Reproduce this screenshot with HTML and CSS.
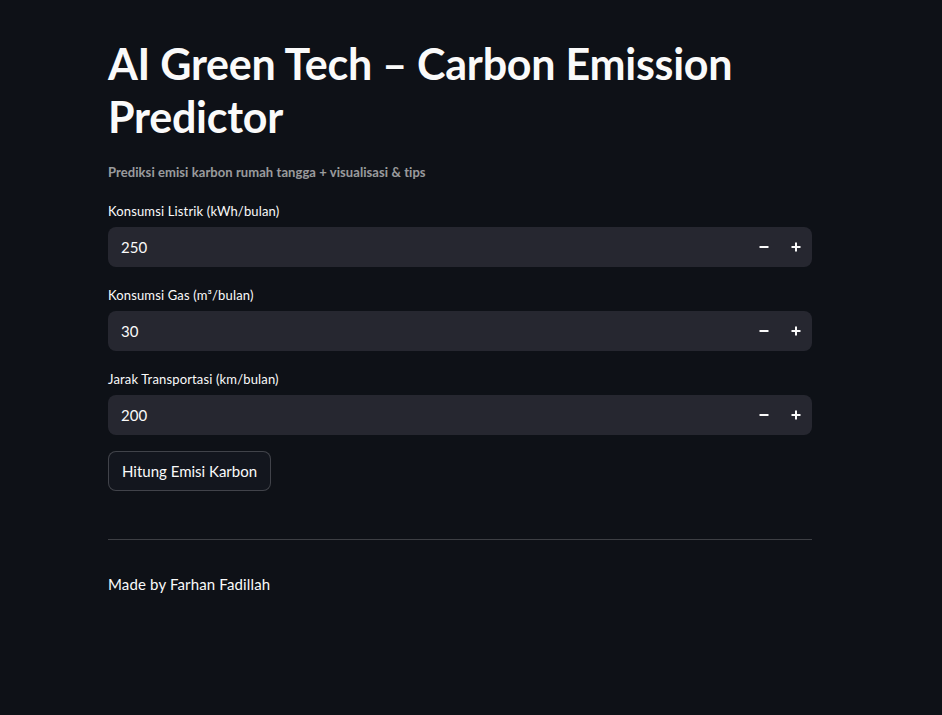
FILE: index.html
```html
<!DOCTYPE html>
<html lang="id">
<head>
<meta charset="utf-8">
<title>AI Green Tech – Carbon Emission Predictor</title>
<link rel="stylesheet" href="styles.css">
</head>
<body>
<main class="app">
  <div class="block">
    <h1 class="title">AI Green Tech – Carbon Emission Predictor</h1>
    <p class="caption">Prediksi emisi karbon rumah tangga + visualisasi &amp; tips</p>

    <div class="field">
      <label class="label">Konsumsi Listrik (kWh/bulan)</label>
      <div class="number-input">
        <span class="value">250</span>
        <button class="step" aria-label="minus"><svg width="12" height="12" viewBox="0 0 12 12"><rect x="1.5" y="5" width="9" height="2" fill="#fafafa"/></svg></button>
        <button class="step" aria-label="plus"><svg width="12" height="12" viewBox="0 0 12 12"><rect x="1.5" y="5" width="9" height="2" fill="#fafafa"/><rect x="5" y="1.5" width="2" height="9" fill="#fafafa"/></svg></button>
      </div>
    </div>

    <div class="field">
      <label class="label">Konsumsi Gas (m³/bulan)</label>
      <div class="number-input">
        <span class="value">30</span>
        <button class="step" aria-label="minus"><svg width="12" height="12" viewBox="0 0 12 12"><rect x="1.5" y="5" width="9" height="2" fill="#fafafa"/></svg></button>
        <button class="step" aria-label="plus"><svg width="12" height="12" viewBox="0 0 12 12"><rect x="1.5" y="5" width="9" height="2" fill="#fafafa"/><rect x="5" y="1.5" width="2" height="9" fill="#fafafa"/></svg></button>
      </div>
    </div>

    <div class="field">
      <label class="label">Jarak Transportasi (km/bulan)</label>
      <div class="number-input">
        <span class="value">200</span>
        <button class="step" aria-label="minus"><svg width="12" height="12" viewBox="0 0 12 12"><rect x="1.5" y="5" width="9" height="2" fill="#fafafa"/></svg></button>
        <button class="step" aria-label="plus"><svg width="12" height="12" viewBox="0 0 12 12"><rect x="1.5" y="5" width="9" height="2" fill="#fafafa"/><rect x="5" y="1.5" width="2" height="9" fill="#fafafa"/></svg></button>
      </div>
    </div>

    <button class="btn">Hitung Emisi Karbon</button>

    <hr class="divider">

    <p class="footer">Made by Farhan Fadillah</p>
  </div>
</main>
</body>
</html>
```

FILE: styles.css
```css
html, body {
  margin: 0;
  padding: 0;
  background: #0e1117;
  color: #fafafa;
  font-family: "Lato", "Noto Sans", sans-serif;
  height: 100%;
}

.app {
  min-height: 715px;
  padding: 37px 0 0 108px;
  box-sizing: border-box;
}

.block {
  width: 704px;
  display: flex;
  flex-direction: column;
}

.title {
  margin: 0;
  font-size: 43px;
  line-height: 53px;
  font-weight: 700;
  letter-spacing: -0.25px;
}

.caption {
  margin: 19px 0 0 0;
  font-size: 13px;
  line-height: 20px;
  color: rgba(250, 250, 250, 0.6);
  font-weight: 700;
  letter-spacing: 0.07px;
}

.field {
  display: flex;
  flex-direction: column;
  margin-top: 19px;
}
.field + .field { margin-top: 18px; }

.label {
  font-size: 13px;
  line-height: 20px;
  padding-bottom: 6px;
  letter-spacing: 0.15px;
}

.number-input {
  height: 40px;
  background: #262730;
  border-radius: 8px;
  display: flex;
  align-items: center;
  padding-left: 13px;
}

.value {
  flex: 1;
  font-size: 15px;
}

.step {
  width: 32px;
  height: 40px;
  background: transparent;
  border: none;
  padding: 0;
  display: flex;
  align-items: center;
  justify-content: center;
}

.btn {
  align-self: flex-start;
  margin-top: 16px;
  height: 40px;
  padding: 0 13px;
  background: #13161e;
  border: 1px solid rgba(250, 250, 250, 0.2);
  border-radius: 8px;
  color: #fafafa;
  font-family: inherit;
  font-size: 15px;
}

.divider {
  margin: 48px 0 0 0;
  border: none;
  border-top: 1px solid rgba(250, 250, 250, 0.2);
}

.footer {
  margin: 33px 0 0 0;
  font-size: 15px;
  line-height: 22px;
  letter-spacing: 0.15px;
}
```
